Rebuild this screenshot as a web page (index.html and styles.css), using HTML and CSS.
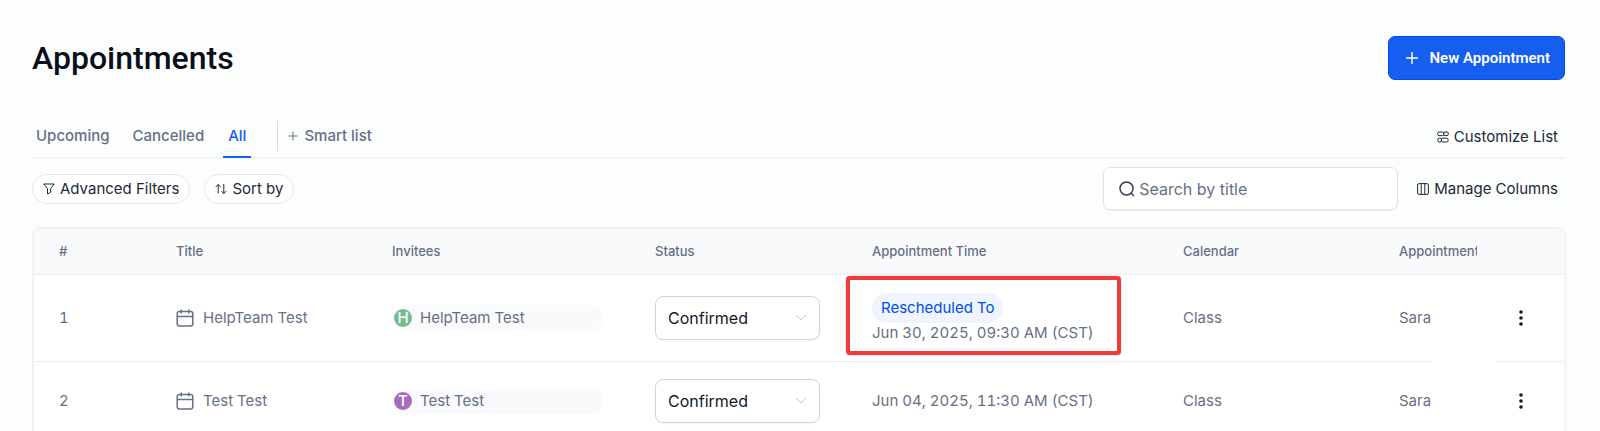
FILE: index.html
```html
<!DOCTYPE html>
<html lang="en">
<head>
    <meta charset="UTF-8">
    <meta name="viewport" content="width=device-width, initial-scale=1.0">
    <title>Appointments</title>
    <link rel="stylesheet" href="styles.css">
</head>
<body>
    <header class="page-header">
        <h1>Appointments</h1>
        <button class="new-btn" type="button">
            <svg width="14" height="14" viewBox="0 0 14 14"><path d="M7 1v12M1 7h12"/></svg>
            New Appointment
        </button>
    </header>

    <nav class="tabs">
        <a class="tab" href="#">Upcoming</a>
        <a class="tab" href="#">Cancelled</a>
        <a class="tab active" href="#">All</a>
        <button class="smart-list" type="button">
            <svg width="10" height="10" viewBox="0 0 10 10"><path d="M5 .5v9M.5 5h9"/></svg>
            Smart list
        </button>
        <button class="link-btn customize" type="button">
            <svg width="12" height="12" viewBox="0 0 12 12">
                <rect x=".7" y="1" width="6" height="3.6" rx="1.2"/>
                <rect x="6.7" y="1" width="4.6" height="3.6" rx="1.2"/>
                <rect x=".7" y="7.2" width="3.8" height="3.8" rx="1.6"/>
                <rect x="4.500" y="7.2" width="6.5" height="3.8" rx="1.2"/>
            </svg>
            Customize List
        </button>
    </nav>

    <div class="toolbar">
        <button class="pill" type="button">
            <svg width="12" height="12" viewBox="0 0 12 12"><path d="M.7 1h10.6L7.6 5.6v3.6L4.5 11V5.600z"/></svg>
            Advanced Filters
        </button>
        <button class="pill" type="button">
            <svg width="12" height="12" viewBox="0 0 12 12"><path d="M3.200 10.500V1.500M.8 3.900l2.400-2.400 2.400 2.400M8.800 1v9.500M6.400 8.100l2.400 2.400 2.400-2.400"/></svg>
            Sort by
        </button>
        <label class="search">
            <svg width="16" height="16" viewBox="0 0 16 16"><circle cx="7.500" cy="7.500" r="6.500"/><path d="M12.200 12.200l2.800 2.800"/></svg>
            <input type="text" placeholder="Search by title" aria-label="Search by title">
        </label>
        <button class="link-btn" type="button">
            <svg width="12" height="12" viewBox="0 0 12 12"><rect x=".6" y=".6" width="10.800" height="10.800" rx="1.500"/><path d="M4.200.6v10.800M7.800.6v10.800"/></svg>
            Manage Columns
        </button>
    </div>

    <div class="table-card">
        <table>
            <colgroup>
                <col class="col-num">
                <col class="col-title">
                <col class="col-invitees">
                <col class="col-status">
                <col class="col-time">
                <col class="col-calendar">
                <col class="col-owner">
                <col class="col-gap">
                <col class="col-actions">
            </colgroup>
            <thead>
                <tr>
                    <th>#</th>
                    <th>Title</th>
                    <th>Invitees</th>
                    <th>Status</th>
                    <th>Appointment Time</th>
                    <th>Calendar</th>
                    <th colspan="2"><div class="clip">Appointment</div></th>
                    <th></th>
                </tr>
            </thead>
            <tbody>
                <tr>
                    <td>1</td>
                    <td>
                        <div class="title">
                            <svg width="18" height="18" viewBox="0 0 18 18"><rect x="1.200" y="2.500" width="15.600" height="14.500" rx="2.200"/><path d="M1.200 7.500h15.600M5.200.5v4M12.800.5v4"/></svg>
                            HelpTeam Test
                        </div>
                    </td>
                    <td><div class="invitee"><span class="avatar green">H</span>HelpTeam Test</div></td>
                    <td>
                        <div class="status">
                            <select aria-label="Status of appointment 1"><option>Confirmed</option></select>
                            <svg width="12" height="8" viewBox="0 0 12 8"><path d="M1 1l5 5 5-5"/></svg>
                        </div>
                    </td>
                    <td class="time">
                        <span class="badge">Rescheduled To</span>
                        <div>Jun 30, 2025, 09:30 AM (CST)</div>
                        <span class="highlight"></span>
                    </td>
                    <td>Class</td>
                    <td class="owner">Sara</td>
                    <td class="gap"></td>
                    <td class="actions">
                        <button class="dots" type="button" aria-label="Actions">
                            <svg width="4" height="16" viewBox="0 0 4 16"><circle cx="2" cy="2" r="1.800"/><circle cx="2" cy="8" r="1.800"/><circle cx="2" cy="14" r="1.800"/></svg>
                        </button>
                    </td>
                </tr>
                <tr>
                    <td>2</td>
                    <td>
                        <div class="title">
                            <svg width="18" height="18" viewBox="0 0 18 18"><rect x="1.200" y="2.500" width="15.600" height="14.500" rx="2.200"/><path d="M1.200 7.500h15.600M5.200.5v4M12.800.5v4"/></svg>
                            Test Test
                        </div>
                    </td>
                    <td><div class="invitee"><span class="avatar purple">T</span>Test Test</div></td>
                    <td>
                        <div class="status">
                            <select aria-label="Status of appointment 2"><option>Confirmed</option></select>
                            <svg width="12" height="8" viewBox="0 0 12 8"><path d="M1 1l5 5 5-5"/></svg>
                        </div>
                    </td>
                    <td class="time">Jun 04, 2025, 11:30 AM (CST)</td>
                    <td>Class</td>
                    <td class="owner">Sara</td>
                    <td class="gap"></td>
                    <td class="actions">
                        <button class="dots" type="button" aria-label="Actions">
                            <svg width="4" height="16" viewBox="0 0 4 16"><circle cx="2" cy="2" r="1.800"/><circle cx="2" cy="8" r="1.800"/><circle cx="2" cy="14" r="1.800"/></svg>
                        </button>
                    </td>
                </tr>
            </tbody>
        </table>
    </div>
</body>
</html>
```
FILE: styles.css
```css
* {
    box-sizing: border-box;
}
body {
    height: 100vh;
    margin: 0;
    padding: 36px 35px 0 32px;
    overflow: hidden;
    background-color: #fcfefd;
    color: #101828;
    font-family: Inter, "Liberation Sans", sans-serif;
    font-size: 15px;
    line-height: 20px;
}
svg {
    flex: none;
    fill: none;
    stroke: currentColor;
}
button {
    font: inherit;
    color: inherit;
    background: none;
    border: none;
    padding: 0;
    cursor: pointer;
}
.page-header {
    display: flex;
    justify-content: space-between;
    align-items: center;
}
h1 {
    margin: 0;
    color: #0b0f1a;
    font-family: Roboto, sans-serif;
    font-size: 32px;
    font-weight: 500;
    line-height: 44px;
}
.new-btn {
    display: flex;
    align-items: center;
    gap: 10px;
    height: 44px;
    padding: 0 14px 0 16px;
    color: #fff;
    background-color: #155eef;
    border: 1px solid #004eeb;
    border-radius: 7px;
    font-family: Roboto, sans-serif;
    font-weight: 600;
}
.new-btn svg {
    stroke-width: 1.4;
}

/* Tabs */
.tabs {
    display: flex;
    align-items: center;
    height: 47px;
    margin-top: 32px;
    border-bottom: 2px solid #f2f4f5;
}
.tab {
    align-self: flex-start;
    height: 46px;
    padding: 14px 4px 0;
    margin-right: 15px;
    color: #667085;
    font-weight: 500;
    text-decoration: none;
}
.tab.active {
    padding: 14px 5px 0;
    margin-right: 26px;
    color: #155eef;
    border-bottom: 2px solid #155eef;
}
.smart-list {
    display: flex;
    align-items: center;
    gap: 6px;
    height: 30px;
    margin-top: 2px;
    padding-left: 10px;
    color: #667085;
    border-left: 1px solid #d5d8de;
    font-weight: 500;
}
.link-btn {
    display: flex;
    align-items: center;
    gap: 5px;
    padding-right: 7px;
    color: #1d2939;
}
.customize {
    margin-top: 4px;
    margin-left: auto;
}

/* Filters and search */
.toolbar {
    display: flex;
    align-items: center;
    gap: 14px;
    margin-top: 8px;
}
.pill {
    display: flex;
    align-items: center;
    gap: 5px;
    height: 30px;
    padding: 0 10px;
    color: #1d2939;
    background-color: #fff;
    border: 1px solid #e4e7ec;
    border-radius: 15px;
}
.search {
    display: flex;
    align-items: center;
    gap: 4px;
    width: 295px;
    height: 43px;
    margin-left: auto;
    margin-right: 5px;
    padding: 0 15px;
    color: #344054;
    background-color: #fff;
    border: 1px solid #dfe2e7;
    border-radius: 7px;
    box-shadow: 0 1px 2px #1018280d;
}
.search svg {
    stroke-width: 1.5;
}
.search input {
    flex: 1;
    min-width: 0;
    padding: 0;
    border: none;
    outline: none;
    background: none;
    font: inherit;
    font-size: 16px;
}
.search input::placeholder {
    color: #667085;
}

/* Table */
.table-card {
    margin-top: 17px;
    overflow: hidden;
    background-color: #fff;
    border: 2px solid #f0f2f5;
    border-right-width: 1px;
    border-radius: 8px;
    box-shadow: 1px 1px 2px #1018280d;
}
table {
    width: 100%;
    table-layout: fixed;
    border-collapse: separate;
    border-spacing: 0;
}
.col-num { width: 117px; }
.col-title { width: 216px; }
.col-invitees { width: 263px; }
.col-status { width: 217px; }
.col-time { width: 311px; }
.col-calendar { width: 216px; }
.col-owner { width: 58px; }
.col-gap { width: 64px; }
.col-actions { width: 69px; }
th {
    height: 46px;
    padding: 0 0 0 25px;
    color: #667085;
    background-color: #f9fafb;
    border-bottom: 2px solid #f0f2f5;
    font-size: 13px;
    font-weight: 500;
    text-align: left;
}
.clip {
    width: 78px;
    overflow: hidden;
}
td {
    height: 87px;
    padding: 0 0 0 25px;
    color: #667085;
    border-bottom: 1px solid #eaecf0;
    font-variant-numeric: tabular-nums;
}
tr:last-child td {
    height: 78px;
}
.title {
    display: flex;
    align-items: center;
    gap: 9px;
}
.title svg {
    stroke-width: 1.5;
}
.invitee {
    display: flex;
    align-items: center;
    gap: 8px;
    width: 211px;
    height: 26px;
    padding-left: 2px;
    background-color: #f9fafb;
    border-radius: 13px;
}
.avatar {
    width: 18px;
    height: 18px;
    color: #fff;
    border-radius: 50%;
    font-weight: 500;
    line-height: 18px;
    text-align: center;
}
.green {
    background-color: #73bd91;
}
.purple {
    background-color: #a56ebd;
}
.status {
    position: relative;
    width: 165px;
}
.status select {
    appearance: none;
    display: block;
    width: 100%;
    height: 44px;
    padding: 0 30px 0 12px;
    color: #101828;
    background-color: #fff;
    border: 1px solid #d0d5dd;
    border-radius: 8px;
    box-shadow: 0 1px 2px #1018280d;
    font: inherit;
    font-size: 16px;
}
.status svg {
    position: absolute;
    top: 18px;
    right: 13px;
    color: #c2c5cb;
    pointer-events: none;
}
.time {
    position: relative;
}
.badge {
    display: inline-block;
    padding: 5px 9px;
    color: #004eeb;
    background-color: #eff4ff;
    border-radius: 15px;
}
.highlight {
    position: absolute;
    top: 1px;
    left: -1px;
    width: 275px;
    height: 79px;
    border: 4px solid #ef3b3b;
    border-radius: 4px;
    box-shadow: 0 0 1px #7a3030;
}
.owner {
    padding-right: 0;
}
.gap {
    padding: 0;
    border-bottom-color: transparent;
}
.actions {
    padding: 0 0 0 18px;
}
.dots {
    display: block;
    padding: 0 5px;
    color: #101828;
}
.dots svg {
    display: block;
    fill: currentColor;
    stroke: none;
}
```
